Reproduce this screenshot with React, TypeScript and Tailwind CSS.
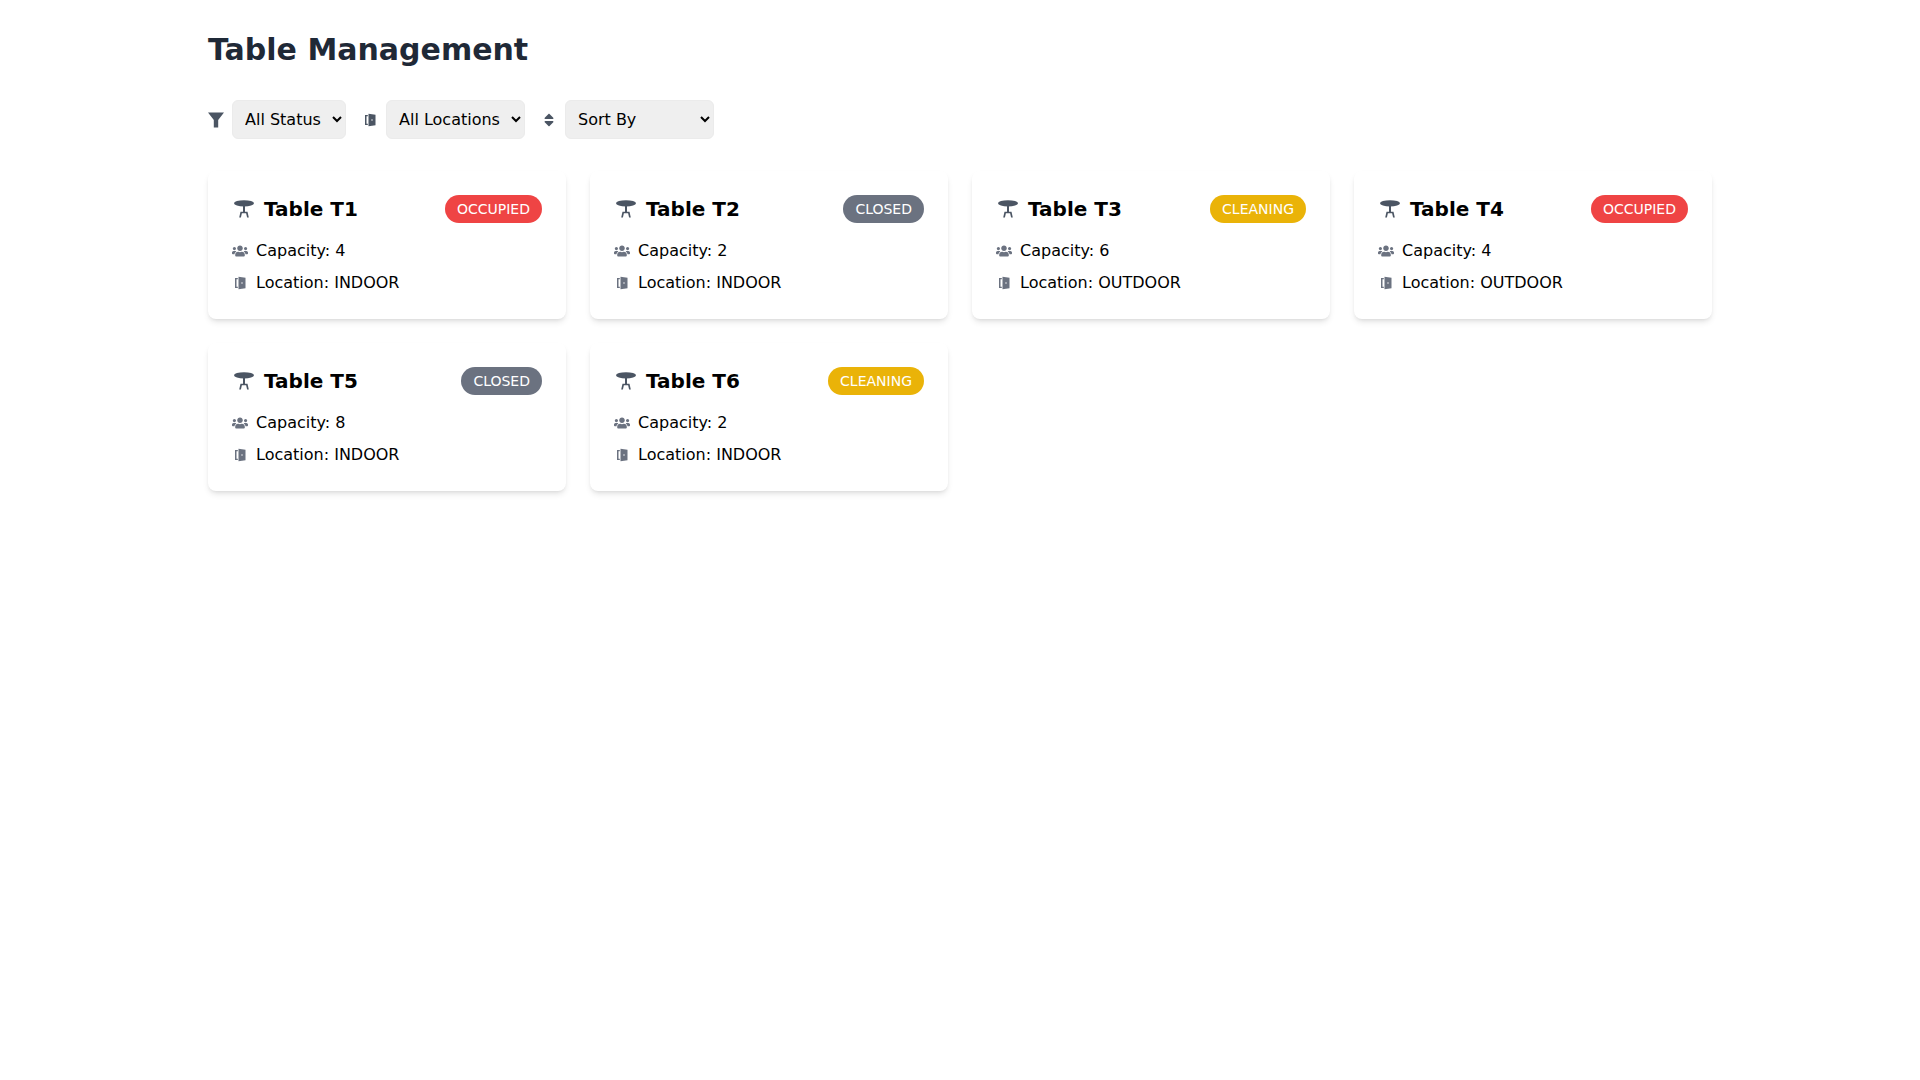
import React from "react";
import { FaSort, FaUsers } from "react-icons/fa";

interface TableInfo {
  name: string;
  capacity: number;
  location: string;
  status: "OCCUPIED" | "CLOSED" | "CLEANING";
}

const tables: TableInfo[] = [
  { name: "T1", capacity: 4, location: "INDOOR", status: "OCCUPIED" },
  { name: "T2", capacity: 2, location: "INDOOR", status: "CLOSED" },
  { name: "T3", capacity: 6, location: "OUTDOOR", status: "CLEANING" },
  { name: "T4", capacity: 4, location: "OUTDOOR", status: "OCCUPIED" },
  { name: "T5", capacity: 8, location: "INDOOR", status: "CLOSED" },
  { name: "T6", capacity: 2, location: "INDOOR", status: "CLEANING" },
];

const statusColors = {
  OCCUPIED: "bg-[#ef4444]",
  CLOSED: "bg-[#6b7280]",
  CLEANING: "bg-[#eab308]",
};

const selectClass = "h-[39px] rounded-md bg-[#efefef] border border-[#ebebeb] px-2 text-base text-black";

function FunnelIcon({ className }: { className: string }) {
  return (
    <svg viewBox="0 0 16 16" fill="currentColor" className={className}>
      <path d="M0 .5h16L10.200 8v7.500H5.800V8z" />
    </svg>
  );
}

function DoorIcon({ className }: { className: string }) {
  return (
    <svg viewBox="0 0 16 16" fill="currentColor" className={className}>
      <path d="M3 3h2.800v1.300H4.500v7.400h1.300V13H3z" />
      <path fillRule="evenodd" d="M6.500 1.800l7 1v10.400l-7 1zM9.500 7.200v1.600h1V7.200z" />
    </svg>
  );
}

function RoundTableIcon({ className }: { className: string }) {
  return (
    <svg viewBox="0 0 24 24" fill="currentColor" className={className}>
      <ellipse cx="12" cy="6.300" rx="10" ry="3.100" />
      <rect x="11" y="9" width="2" height="6" />
      <path d="M8.500 14.800h7l1.300 5.700h-1.700l-1-4.200H9.900l-1 4.200H7.200z" />
    </svg>
  );
}

function TableCard({ table }: { table: TableInfo }) {
  return (
    <div className="bg-white rounded-lg shadow-md p-6">
      <div className="flex justify-between items-center mb-4">
        <div className="flex items-center gap-2">
          <RoundTableIcon className="text-[#4b5563] w-6 h-6" />
          <h2 className="text-xl font-bold text-black">Table {table.name}</h2>
        </div>
        <span className={`${statusColors[table.status]} text-white text-sm px-3 py-1 rounded-full`}>
          {table.status}
        </span>
      </div>
      <div className="flex items-center gap-2 mb-2 text-base text-black">
        <FaUsers className="text-[#6b7280] w-4 h-4" />
        <span>Capacity: {table.capacity}</span>
      </div>
      <div className="flex items-center gap-2 text-base text-black">
        <DoorIcon className="text-[#6b7280] w-4 h-4" />
        <span>Location: {table.location}</span>
      </div>
    </div>
  );
}

export default function App() {
  return (
    <div className="bg-white min-h-screen font-['DejaVu_Sans',sans-serif]">
      <div className="w-[1536px] mx-auto px-4 py-8">
        <h1 className="text-3xl font-bold text-[#1f2937] mb-8">Table Management</h1>
        <div className="flex items-center gap-4 mb-8">
          <div className="flex items-center gap-2">
            <FunnelIcon className="text-[#4b5563] w-4 h-4" />
            <select className={selectClass}>
              <option>All Status</option>
            </select>
          </div>
          <div className="flex items-center gap-2">
            <DoorIcon className="text-[#4b5563] w-4 h-4" />
            <select className={selectClass}>
              <option>All Locations</option>
            </select>
          </div>
          <div className="flex items-center gap-2">
            <FaSort className="text-[#4b5563] w-4 h-4" />
            <select className={`${selectClass} w-[149px]`}>
              <option>Sort By</option>
            </select>
          </div>
        </div>
        <div className="grid grid-cols-4 gap-6">
          {tables.map((table) => (
            <TableCard key={table.name} table={table} />
          ))}
        </div>
      </div>
    </div>
  );
}
